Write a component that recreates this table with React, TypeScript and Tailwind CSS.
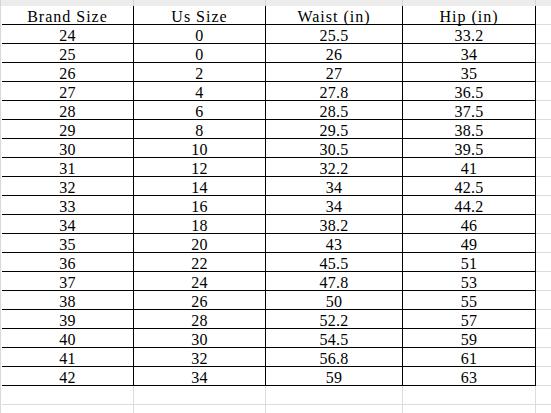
import React from "react";

const rows: string[][] = [
  ["24", "0", "25.5", "33.2"],
  ["25", "0", "26", "34"],
  ["26", "2", "27", "35"],
  ["27", "4", "27.8", "36.5"],
  ["28", "6", "28.5", "37.5"],
  ["29", "8", "29.5", "38.5"],
  ["30", "10", "30.5", "39.5"],
  ["31", "12", "32.2", "41"],
  ["32", "14", "34", "42.5"],
  ["33", "16", "34", "44.2"],
  ["34", "18", "38.2", "46"],
  ["35", "20", "43", "49"],
  ["36", "22", "45.5", "51"],
  ["37", "24", "47.8", "53"],
  ["38", "26", "50", "55"],
  ["39", "28", "52.2", "57"],
  ["40", "30", "54.5", "59"],
  ["41", "32", "56.8", "61"],
  ["42", "34", "59", "63"],
];

const widths = ["w-[132px]", "w-[132px]", "w-[137px]", "w-[133px]"];

function Row({ cells, header }: { cells: string[]; header?: boolean }) {
  return (
    <div className="flex h-[19px]">
      <div className="w-[2px] shrink-0 border-l border-[#dadada]" />
      {cells.map((c, i) => (
        <div
          key={i}
          className={`${widths[i]} shrink-0 border-r border-b border-black flex items-start justify-center leading-[18px] pt-[2px] whitespace-pre ${
            header ? "tracking-[1px]" : "tracking-[0.3px]"
          }`}
        >
          {c}
        </div>
      ))}
      <div className="flex-1 border-b border-[#dcdcdc]" />
    </div>
  );
}

function BlankRow() {
  return (
    <div className="flex h-[19px]">
      <div className="w-[2px] shrink-0 border-l border-[#dadada]" />
      {widths.map((w, i) => (
        <div key={i} className={`${w} shrink-0 border-r border-b border-[#dcdcdc]`} />
      ))}
      <div className="flex-1 border-b border-[#dcdcdc]" />
    </div>
  );
}

export default function App() {
  return (
    <div className="w-[551px] h-[413px] bg-white overflow-hidden text-black font-['Liberation_Serif',serif] text-[16px]">
      <div className="flex h-[6px] bg-[#ececec]">
        <div className="w-[2px] shrink-0 border-l border-[#d4d4d4]" />
        {widths.map((w, i) => (
          <div key={i} className={`${w} shrink-0 border-r border-[#d4d4d4]`} />
        ))}
        <div className="flex-1" />
      </div>
      <Row header cells={["Brand Size", "Us Size", "Waist (in)", "Hip (in)"]} />
      {rows.map((r, i) => (
        <Row key={i} cells={r} />
      ))}
      <BlankRow />
      <BlankRow />
    </div>
  );
}
